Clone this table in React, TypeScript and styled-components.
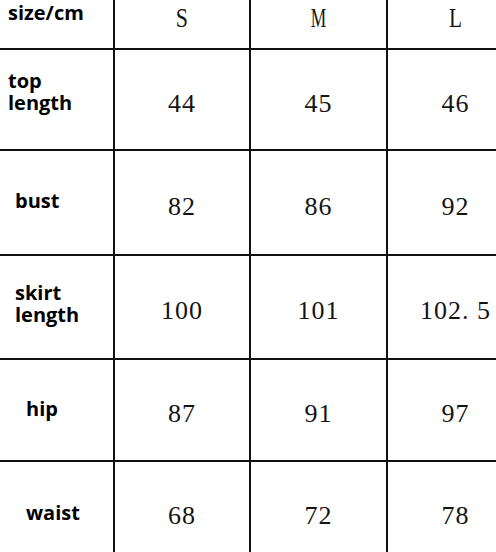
import React from "react";
import styled, { createGlobalStyle } from "styled-components";

const Global = createGlobalStyle`
  html, body { margin: 0; padding: 0; background: #ffffff; }
  #root { width: 496px; height: 552px; }
`;

const Frame = styled.div`
  width: 496px;
  height: 552px;
  overflow: hidden;
  background: #ffffff;
`;

const Table = styled.div`
  display: grid;
  grid-template-columns: 113px 134px 135px 135px;
  grid-template-rows: 48px 99px 103px 102px 100px 100px;
  gap: 2px;
  background: #111111;
  width: max-content;
`;

const LabelCell = styled.div<{ $indent: number; $top: number }>`
  background: #ffffff;
  display: flex;
  align-items: flex-start;
  padding: ${(p) => p.$top}px 0 0 ${(p) => p.$indent}px;
  font-family: "Open Sans", "Noto Sans", sans-serif;
  font-weight: 700;
  font-size: 20px;
  line-height: 22px;
  color: #000000;
`;

const ValueCell = styled.div<{ $header?: boolean }>`
  background: #ffffff;
  display: flex;
  align-items: center;
  justify-content: center;
  padding: ${(p) => (p.$header ? "0 0 12px 0" : "8px 0 0 0")};
  font-family: "Liberation Serif", "Times New Roman", serif;
  font-size: 26px;
  line-height: 30px;
  letter-spacing: 1px;
  color: #141414;
`;

const SizeLetter = styled.span<{ $squeeze: number }>`
  display: inline-block;
  font-size: 28px;
  letter-spacing: 0;
  transform: scaleX(${(p) => p.$squeeze});
`;

type Row = { label: string[]; indent: number; top: number; values: string[] };

const rows: Row[] = [
  { label: ["top", "length"], indent: 8, top: 20, values: ["44", "45", "46"] },
  { label: ["bust"], indent: 15, top: 39, values: ["82", "86", "92"] },
  { label: ["skirt", "length"], indent: 15, top: 26, values: ["100", "101", "102. 5"] },
  { label: ["hip"], indent: 26, top: 38, values: ["87", "91", "97"] },
  { label: ["waist"], indent: 26, top: 40, values: ["68", "72", "78"] },
];

const sizes = [
  { name: "S", squeeze: 0.78 },
  { name: "M", squeeze: 0.62 },
  { name: "L", squeeze: 0.76 },
];

export default function App() {
  return (
    <Frame>
      <Global />
      <Table>
        <LabelCell $indent={8} $top={2}>size/cm</LabelCell>
        {sizes.map((s) => (
          <ValueCell key={s.name} $header>
            <SizeLetter $squeeze={s.squeeze}>{s.name}</SizeLetter>
          </ValueCell>
        ))}
        {rows.map((r) => (
          <React.Fragment key={r.label.join(" ")}>
            <LabelCell $indent={r.indent} $top={r.top}>
              <div>
                {r.label.map((l, i) => (
                  <div key={i}>{l}</div>
                ))}
              </div>
            </LabelCell>
            {r.values.map((v, i) => (
              <ValueCell key={i}>{v}</ValueCell>
            ))}
          </React.Fragment>
        ))}
      </Table>
    </Frame>
  );
}
